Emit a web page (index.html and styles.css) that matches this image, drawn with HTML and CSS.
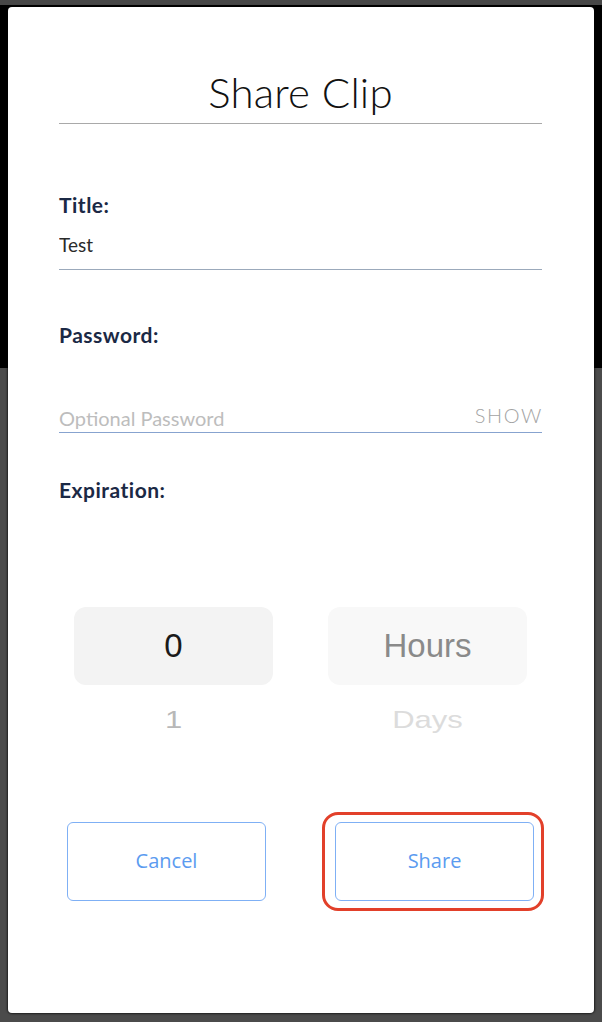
FILE: index.html
```html
<!DOCTYPE html>
<html lang="en">
<head>
  <meta charset="UTF-8" />
  <meta name="viewport" content="width=device-width, initial-scale=1.0" />
  <title>Share Clip</title>
  <link rel="stylesheet" href="styles.css">
</head>
<body>
  <div class="modal">
    <h1 class="modal-title">Share Clip</h1>

    <form class="share-form">
      <div class="field">
        <label class="field-label" for="clip-title">Title:</label>
        <input id="clip-title" class="field-input" type="text" value="Test">
      </div>

      <div class="field field-password">
        <label class="field-label" for="clip-password">Password:</label>
        <div class="password-row">
          <input id="clip-password" class="field-input" type="password" placeholder="Optional Password">
          <button type="button" class="show-toggle">SHOW</button>
        </div>
      </div>

      <div class="field field-expiration">
        <span class="field-label">Expiration:</span>
        <div class="picker">
          <div class="picker-col">
            <div class="picker-selected">0</div>
            <div class="picker-next">1</div>
          </div>
          <div class="picker-col picker-unit">
            <div class="picker-selected">Hours</div>
            <div class="picker-next">Days</div>
          </div>
        </div>
      </div>

      <div class="actions">
        <button type="button" class="btn">Cancel</button>
        <div class="btn-wrap">
          <button type="submit" class="btn">Share</button>
          <span class="highlight-ring"></span>
        </div>
      </div>
    </form>
  </div>
</body>
</html>
```

FILE: styles.css
```css
* {
  box-sizing: border-box;
  margin: 0;
  padding: 0;
}
body {
  width: 602px;
  height: 1022px;
  padding: 7px 8px 9px;
  overflow: hidden;
  font-family: 'Lato', sans-serif;
  background: linear-gradient(#474747 0, #474747 5px, #000 5px, #000 368px, #4b4b4b 368px);
}
.modal {
  height: 1006px;
  background: #fff;
  border-radius: 4px;
  box-shadow: 0 0 2px 1px rgba(0, 0, 0, 0.6);
  padding: 60px 52px 0 51px;
}
.modal-title {
  font-family: 'Lato', sans-serif;
  font-weight: 300;
  font-size: 42px;
  line-height: 50px;
  letter-spacing: 0.2px;
  color: #111;
  text-align: center;
  padding-bottom: 6px;
  border-bottom: 1px solid #a9a9a9;
}
.field-label {
  display: block;
  font-weight: 700;
  font-size: 21px;
  line-height: 23px;
  letter-spacing: 0.5px;
  color: #1b2945;
}
.field {
  margin-top: 69px;
}
.field-input {
  display: block;
  width: 100%;
  border: none;
  outline: none;
  background: transparent;
  font-family: 'Lato', sans-serif;
  font-size: 19px;
  line-height: 23px;
  height: 23px;
  color: #2a2a2a;
}
.field > .field-input {
  margin-top: 17px;
  height: 37px;
  padding-bottom: 13px;
  border-bottom: 1px solid #9ba9bb;
}
.field-password {
  margin-top: 53px;
}
.password-row {
  display: flex;
  align-items: flex-end;
  margin-top: 61px;
  padding-bottom: 2px;
  border-bottom: 1px solid #87a3cf;
}
.password-row .field-input {
  font-size: 20px;
}
.password-row .field-input::placeholder {
  color: #bdbdbd;
}
.show-toggle {
  border: none;
  background: none;
  font-family: 'Lato', sans-serif;
  font-weight: 300;
  font-size: 20px;
  line-height: 23px;
  letter-spacing: 1.6px;
  margin-right: -1px;
  color: #a3a3a3;
  position: relative;
  top: -3px;
}
.field-expiration {
  margin-top: 45px;
}
.picker {
  display: flex;
  justify-content: center;
  gap: 55px;
  margin-top: 106px;
}
.picker-col {
  width: 199px;
  display: flex;
  flex-direction: column;
  align-items: center;
  font-family: 'Liberation Sans', sans-serif;
}
.picker-selected {
  width: 100%;
  height: 78px;
  display: flex;
  align-items: center;
  justify-content: center;
  background: #f3f3f3;
  border-radius: 12px;
  font-size: 33px;
  color: #1a1a1a;
}
.picker-unit .picker-selected {
  background: #f8f8f8;
  color: #8a8a8a;
}
.picker-next {
  margin-top: 18px;
  font-size: 31px;
  line-height: 34px;
  color: #b8b8b8;
  transform: scaleY(0.78);
}
.picker-unit .picker-next {
  color: #dcdcdc;
}
.actions {
  display: flex;
  justify-content: center;
  gap: 69px;
  margin-top: 85px;
}
.btn-wrap {
  position: relative;
}
.btn {
  display: block;
  width: 199px;
  height: 79px;
  border: 1px solid #7fb0f5;
  border-radius: 6px;
  background: #fff;
  font-family: 'Open Sans', sans-serif;
  font-size: 20px;
  color: #5b9bf0;
  padding-bottom: 2px;
}
.highlight-ring {
  position: absolute;
  top: -10px;
  bottom: -10px;
  left: -13px;
  right: -10px;
  border: 3px solid #e2402a;
  border-radius: 16px;
  pointer-events: none;
}
```
